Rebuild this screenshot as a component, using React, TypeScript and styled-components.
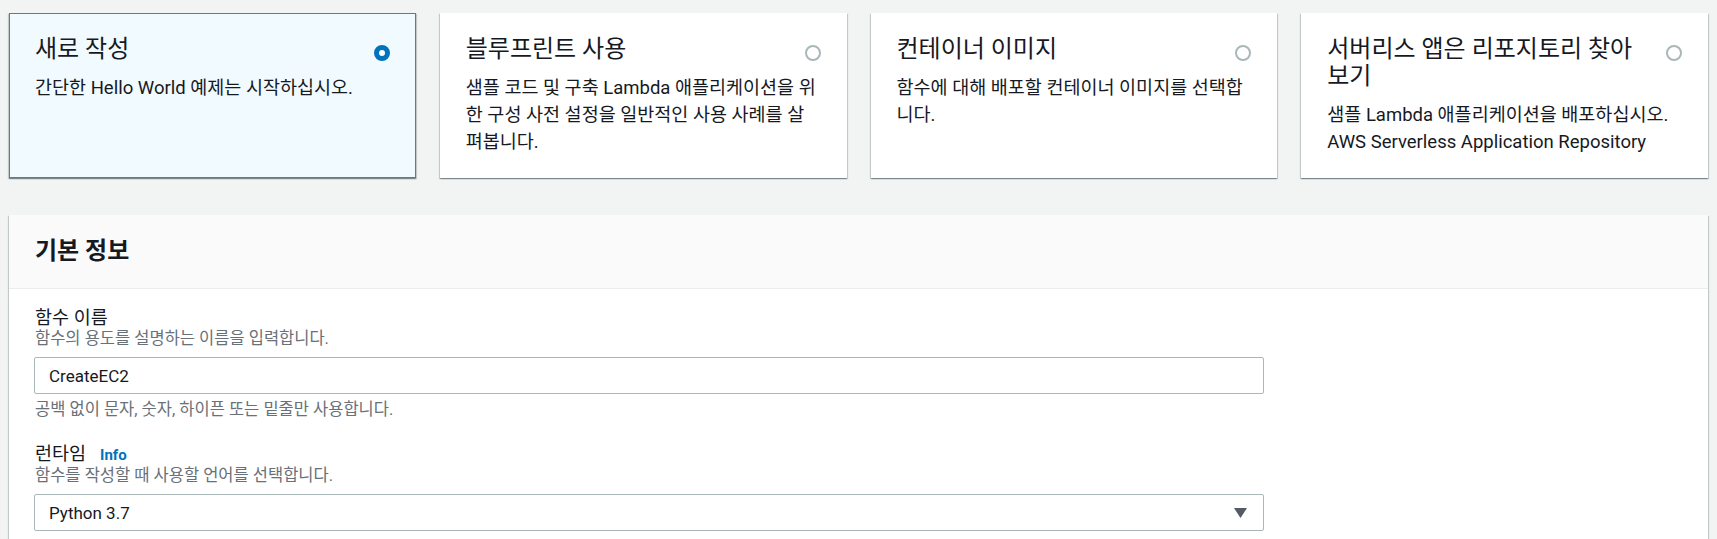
import React from "react";
import styled, { createGlobalStyle } from "styled-components";

const GlobalStyle = createGlobalStyle`
  html, body {
    margin: 0;
    padding: 0;
    background: #f2f3f3;
  }
  body {
    font-family: Roboto, "Noto Sans CJK KR", sans-serif;
    color: #16191f;
  }
  * { box-sizing: border-box; }
`;

const Page = styled.div`
  padding: 13px 9px 0;
`;

const CardGrid = styled.div`
  display: grid;
  grid-template-columns: repeat(4, 1fr);
  gap: 24px;
`;

const Card = styled.div<{ $selected?: boolean }>`
  display: flex;
  flex-direction: column;
  padding: 22px 25px 21px;
  background: ${(p) => (p.$selected ? "#f1faff" : "#ffffff")};
  border: 1px solid ${(p) => (p.$selected ? "#00a1c9" : "transparent")};
  box-shadow: 0 1px 1px 0 rgba(0, 28, 36, 0.3),
    1px 1px 1px 0 rgba(0, 28, 36, 0.15),
    -1px 1px 1px 0 rgba(0, 28, 36, 0.15);
`;

const CardHead = styled.div`
  display: flex;
  align-items: flex-start;
  gap: 12px;
`;

const CardTitle = styled.div`
  flex: 1;
  font-size: 24px;
  line-height: 27px;
  white-space: nowrap;
  color: #16191f;
`;

const Radio = styled.span<{ $checked?: boolean }>`
  flex-shrink: 0;
  width: 16px;
  height: 16px;
  margin-top: 9px;
  border-radius: 50%;
  background: #ffffff;
  border: ${(p) => (p.$checked ? "5px solid #0073bb" : "2px solid #aab7b8")};
`;

const CardDesc = styled.div`
  margin-top: 12px;
  font-size: 18.5px;
  line-height: 27px;
  white-space: nowrap;
  color: #16191f;
`;

const Line = styled.span`
  display: block;
`;

const Panel = styled.section`
  margin-top: 37px;
  background: #ffffff;
  box-shadow: 0 1px 1px 0 rgba(0, 28, 36, 0.3),
    1px 1px 1px 0 rgba(0, 28, 36, 0.15),
    -1px 1px 1px 0 rgba(0, 28, 36, 0.15);
`;

const PanelHeader = styled.header`
  background: #fafafa;
  border-bottom: 1px solid #eaeded;
  padding: 22px 26px 23px;
`;

const PanelTitle = styled.h2`
  margin: 0;
  font-size: 24px;
  line-height: 28px;
  font-weight: 700;
  color: #16191f;
`;

const PanelBody = styled.div`
  padding: 18px 25px 40px;
  display: flex;
  flex-direction: column;
  gap: 23px;
`;

const Field = styled.div`
  display: flex;
  flex-direction: column;
  width: 1230px;
`;

const Label = styled.div`
  display: flex;
  align-items: baseline;
  font-size: 18.5px;
  line-height: 22px;
  color: #16191f;
  padding-left: 1px;
`;

const InfoLink = styled.a`
  margin-left: 14px;
  font-size: 15px;
  font-weight: 700;
  color: #0073bb;
  text-decoration: none;
`;

const Description = styled.div`
  font-size: 16.5px;
  line-height: 20px;
  color: #687078;
  padding-left: 1px;
`;

const Hint = styled(Description)`
  margin-top: 6px;
`;

const Control = styled.div`
  margin-top: 8px;
  height: 37px;
  display: flex;
  align-items: center;
  padding: 0 14px;
  border: 1px solid #aab7b8;
  border-radius: 2px;
  background: #ffffff;
  font-size: 17px;
  color: #16191f;
`;

const ControlValue = styled.span`
  flex: 1;
`;

const Caret = styled.svg`
  width: 13px;
  height: 10px;
  margin-right: 2px;
  flex-shrink: 0;
`;

type Option = {
  title: string[];
  desc: string[];
  selected?: boolean;
};

const options: Option[] = [
  {
    title: ["새로 작성"],
    desc: ["간단한 Hello World 예제는 시작하십시오."],
    selected: true,
  },
  {
    title: ["블루프린트 사용"],
    desc: [
      "샘플 코드 및 구축 Lambda 애플리케이션을 위",
      "한 구성 사전 설정을 일반적인 사용 사례를 살",
      "펴봅니다.",
    ],
  },
  {
    title: ["컨테이너 이미지"],
    desc: ["함수에 대해 배포할 컨테이너 이미지를 선택합", "니다."],
  },
  {
    title: ["서버리스 앱은 리포지토리 찾아", "보기"],
    desc: [
      "샘플 Lambda 애플리케이션을 배포하십시오.",
      "AWS Serverless Application Repository",
    ],
  },
];

export default function App() {
  return (
    <>
      <GlobalStyle />
      <Page>
        <CardGrid>
          {options.map((o) => (
            <Card key={o.title.join("")} $selected={o.selected}>
              <CardHead>
                <CardTitle>
                  {o.title.map((t) => (
                    <Line key={t}>{t}</Line>
                  ))}
                </CardTitle>
                <Radio $checked={o.selected} />
              </CardHead>
              <CardDesc>
                {o.desc.map((d) => (
                  <Line key={d}>{d}</Line>
                ))}
              </CardDesc>
            </Card>
          ))}
        </CardGrid>

        <Panel>
          <PanelHeader>
            <PanelTitle>기본 정보</PanelTitle>
          </PanelHeader>
          <PanelBody>
            <Field>
              <Label>함수 이름</Label>
              <Description>함수의 용도를 설명하는 이름을 입력합니다.</Description>
              <Control>
                <ControlValue>CreateEC2</ControlValue>
              </Control>
              <Hint>공백 없이 문자, 숫자, 하이픈 또는 밑줄만 사용합니다.</Hint>
            </Field>
            <Field>
              <Label>
                런타임<InfoLink href="#">Info</InfoLink>
              </Label>
              <Description>함수를 작성할 때 사용할 언어를 선택합니다.</Description>
              <Control>
                <ControlValue>Python 3.7</ControlValue>
                <Caret viewBox="0 0 13 10">
                  <path d="M0 0 H13 L6.5 10 Z" fill="#545b64" />
                </Caret>
              </Control>
            </Field>
          </PanelBody>
        </Panel>
      </Page>
    </>
  );
}
